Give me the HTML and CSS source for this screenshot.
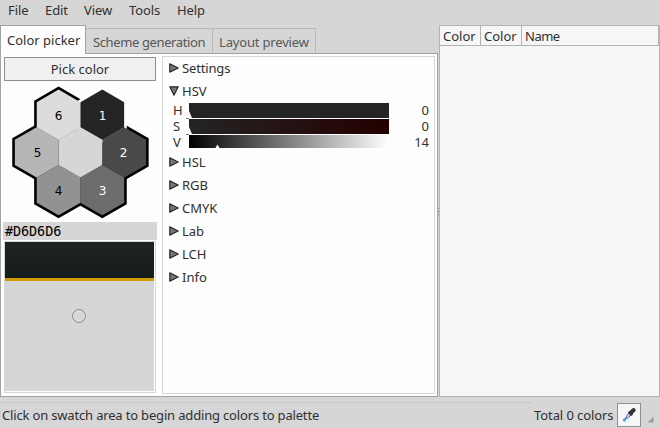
FILE: index.html
```html
<!DOCTYPE html>
<html lang="en">
<head>
<meta charset="utf-8">
<title>Color picker</title>
<link rel="stylesheet" href="styles.css">
</head>
<body>
<div class="app">
  <nav class="menubar"><span class="m-file">File</span><span class="m-edit">Edit</span><span class="m-view">View</span><span class="m-tools">Tools</span><span>Help</span></nav>
  <main class="workspace">
    <section class="notebook">
      <div class="tabs">
        <div class="tab active"><span>Color picker</span></div>
        <div class="tab scheme"><span>Scheme generation</span></div>
        <div class="tab layout"><span>Layout preview</span></div>
      </div>
      <div class="page">
        <div class="picker">
          <button class="pick"><span>Pick color</span></button>
          <svg class="wheel" width="154" height="141" viewBox="3 81 154 141">
            <defs><path id="hex" d="M0-25.2 21.85-12.6V12.6L0 25.2-21.85 12.6V-12.6Z"/></defs>
            <g fill="none" stroke="#000" stroke-width="5.2">
              <use href="#hex" x="58.6" y="114.8"/><use href="#hex" x="36.7" y="152.4"/><use href="#hex" x="58.6" y="190.1"/><use href="#hex" x="102.3" y="190.1"/><use href="#hex" x="124.2" y="152.4"/>
            </g>
            <use href="#hex" x="102.3" y="114.8" fill="none" stroke="#fdfdfd" stroke-width="5.2"/>
            <use href="#hex" x="58.6" y="114.8" fill="#dcdcdc"/>
            <use href="#hex" x="102.3" y="114.8" fill="#242424"/>
            <use href="#hex" x="124.2" y="152.4" fill="#494949"/>
            <use href="#hex" x="102.3" y="190.1" fill="#6d6d6d"/>
            <use href="#hex" x="58.6" y="190.1" fill="#929292"/>
            <use href="#hex" x="36.7" y="152.4" fill="#b6b6b6"/>
            <use href="#hex" x="80.4" y="152.4" fill="#d6d6d6"/>
            <g class="digits"><text x="58.6" y="119.8">6</text><text x="102.5" y="119.8" fill="#fff">1</text><text x="123.6" y="157" fill="#fff">2</text><text x="102.5" y="195" fill="#fff">3</text><text x="58.6" y="195">4</text><text x="37.5" y="157">5</text></g>
          </svg>
          <div class="hexcode">#D6D6D6</div>
          <div class="swatch"><div class="dark"></div><div class="light"><svg width="16" height="16" viewBox="0 0 16 16"><circle cx="8" cy="8" r="6.3" fill="none" stroke="#777"/><circle cx="8" cy="8" r="5.3" fill="none" stroke="#e4e4e4"/></svg></div></div>
        </div>
        <div class="details">
          <div class="expander"><svg width="10" height="10"><path class="arrow" d="M.8.9 9.2 5 .8 9.1Z"/></svg><span class="s-settings">Settings</span></div>
          <div class="expander"><svg width="10" height="10"><path class="arrow" d="M.8.8H9.2L5 9.2Z"/></svg><span>HSV</span></div>
          <div class="sliders">
            <div class="slider"><label>H</label><div class="bar hue"><svg class="mark" width="6" height="16"><path d="M0 8 3 15H0Z" fill="#fff"/><path class="tick" d="M0 15.5H3"/></svg></div><output>0</output></div>
            <div class="slider"><label>S</label><div class="bar sat"><svg class="mark" width="6" height="16"><path d="M0 8 3 15H0Z" fill="#fff"/><path class="tick" d="M0 15.5H3"/></svg></div><output>0</output></div>
            <div class="slider"><label>V</label><div class="bar val"><svg class="mark pos" width="5" height="15"><path d="M0.5 13 2.5 9.5 4.5 13Z" fill="#fff"/></svg></div><output>14</output></div>
          </div>
          <div class="expander"><svg width="10" height="10"><path class="arrow" d="M.8.9 9.2 5 .8 9.1Z"/></svg><span>HSL</span></div>
          <div class="expander"><svg width="10" height="10"><path class="arrow" d="M.8.9 9.2 5 .8 9.1Z"/></svg><span>RGB</span></div>
          <div class="expander"><svg width="10" height="10"><path class="arrow" d="M.8.9 9.2 5 .8 9.1Z"/></svg><span>CMYK</span></div>
          <div class="expander"><svg width="10" height="10"><path class="arrow" d="M.8.9 9.2 5 .8 9.1Z"/></svg><span>Lab</span></div>
          <div class="expander"><svg width="10" height="10"><path class="arrow" d="M.8.9 9.2 5 .8 9.1Z"/></svg><span>LCH</span></div>
          <div class="expander"><svg width="10" height="10"><path class="arrow" d="M.8.9 9.2 5 .8 9.1Z"/></svg><span>Info</span></div>
        </div>
      </div>
    </section>
    <div class="grip"><i></i><i></i><i></i></div>
    <section class="palette">
      <div class="columns"><div class="col">Color</div><div class="col">Color</div><div class="col name">Name</div></div>
    </section>
  </main>
  <footer class="status">
    <div class="message"><span>Click on swatch area to begin adding colors to palette</span></div>
    <div class="total">Total 0 colors</div>
    <button class="dropper"><svg width="14" height="16" viewBox="0 0 14 16"><path d="M4.8 8.6 8 5.2 10 7.2 6.2 10.6 3.2 12.4Z" fill="#c9c9f0" stroke="#55559c" stroke-width=".9"/><path d="M6.7 4.8 10.2 8.2" stroke="#222" stroke-width="2"/><path d="M8.7 6 11.6 3" stroke="#333" stroke-width="4" stroke-linecap="round"/><path d="M2.2 10.7C1.2 12.3.8 13 1 13.8a1.5 1.5 0 0 0 2.8 0C4 13 3.3 12 2.2 10.7Z" fill="#35aee5"/></svg></button>
    <svg class="resize" width="7" height="7"><path d="M6.5.5V6.5H.5Z" fill="#9c9c9c"/></svg>
  </footer>
</div>
</body>
</html>
```
FILE: styles.css
```css
* { box-sizing: border-box; }
body { margin: 0; font: 13px/18px "Noto Sans", "Open Sans", sans-serif; color: #303030; background: #d6d6d6; }
span, .col, .total { white-space: nowrap; }
button { margin: 0; padding: 0; font: inherit; color: inherit; border-radius: 0; }
.app { width: 660px; height: 428px; display: flex; flex-direction: column; overflow: hidden; }
.menubar { height: 25px; padding: 1px 0 0 8px; display: flex; }
.menubar span { letter-spacing: -.1px; }
.m-file { width: 37px; }
.m-edit { width: 39px; }
.m-view { width: 45px; }
.m-tools { width: 48px; }
.workspace { height: 373px; display: flex; }
.notebook { width: 438px; }
.tabs { height: 28px; display: flex; align-items: flex-end; }
.tab { height: 25px; border: 1px solid #b9b9b9; border-bottom: 0; color: #575757; padding: 4px 0 0 6px; }
.active { width: 86px; height: 29px; margin-bottom: -1px; background: #fdfdfd; border-color: #a3a3a3; color: #303030; padding-top: 5px; z-index: 1; }
.scheme { width: 127px; border-left: 0; padding-left: 7px; }
.scheme span { letter-spacing: -.38px; }
.layout { width: 103px; border-left: 0; }
.layout span { letter-spacing: -.17px; }
.page { height: 344px; display: flex; gap: 5px; padding: 3px 2px 2px; background: #fdfdfd; border: 1px solid #a3a3a3; }
.picker { width: 154px; display: flex; flex-direction: column; align-items: center; }
.pick { width: 152px; height: 24px; background: #f0f0f0; border: 1px solid #8f8f8f; }
.wheel { display: block; flex: none; }
.digits { font: 12px "DejaVu Sans", sans-serif; text-anchor: middle; }
.hexcode { width: 154px; height: 18px; flex: none; padding-left: 2px; background: #d6d6d6; color: #000; font: 13.5px/19px "DejaVu Sans Mono", monospace; letter-spacing: -.1px; }
.swatch { width: 152px; height: 152px; margin-top: 1px; border: 1px solid #d6d6d6; padding: 0 1px 1px 0; flex: none; }
.dark { height: 36px; background: linear-gradient(#1e2323, #1b1e1e 70%, #151d1c); }
.light { height: 113px; border-top: 3px solid #cf9b00; background: #d6d6d6; display: flex; justify-content: center; padding: 27px 1px 0 0; }
.details { width: 273px; height: 338px; margin-top: -1px; border: 1px solid #d6d6d6; padding: 0 5px; }
.expander { height: 23px; display: flex; align-items: center; gap: 3px; padding: 0 0 2px 1px; }
.s-settings { letter-spacing: -.15px; }
.arrow { fill: #777; stroke: #292929; stroke-width: 1.2; stroke-linejoin: round; }
.sliders { height: 48px; }
.slider { height: 16px; display: flex; }
.slider label { width: 15px; margin-left: 6px; padding-right: 1px; line-height: 15px; text-indent: -1px; }
.bar { width: 200px; height: 15px; }
.hue { background: #242424; }
.sat { background: linear-gradient(90deg, #242424, #240000); }
.val { height: 13px; background: linear-gradient(90deg, #000, #fff); }
.mark { display: block; margin-left: -3px; }
.mark path:first-child { transform: translateX(3px); }
.tick { stroke: #777; }
.mark.pos { margin-left: 26px; }
.mark.pos path:first-child { transform: none; }
.slider output { flex: 1; text-align: right; line-height: 15px; }
.grip { width: 1px; display: flex; flex-direction: column; align-items: center; justify-content: center; gap: 2px; }
.grip i { width: 1px; height: 1px; background: #888; }
.palette { width: 221px; height: 372px; background: #f6f6f6; border: 1px solid #b3b3b3; }
.columns { height: 20px; display: flex; border-bottom: 1px solid #b3b3b3; }
.col { width: 41px; padding: 1px 0 0 3px; border-right: 1px solid #b3b3b3; }
.name { flex: 1; letter-spacing: -.5px; }
.status { height: 30px; display: flex; }
.message { width: 532px; height: 26px; margin-top: 4px; border-top: 1px solid #c7c7c7; padding: 3px 2px; }
.message span { letter-spacing: -.17px; }
.total { width: 85px; padding: 8px 0 0 2px; letter-spacing: -.08px; }
.dropper { width: 24px; height: 24px; margin-top: 5px; background: #f6f6f6; border: 1px solid #909090; display: flex; align-items: center; justify-content: center; }
.resize { margin: 18px 0 0 6px; }
```
